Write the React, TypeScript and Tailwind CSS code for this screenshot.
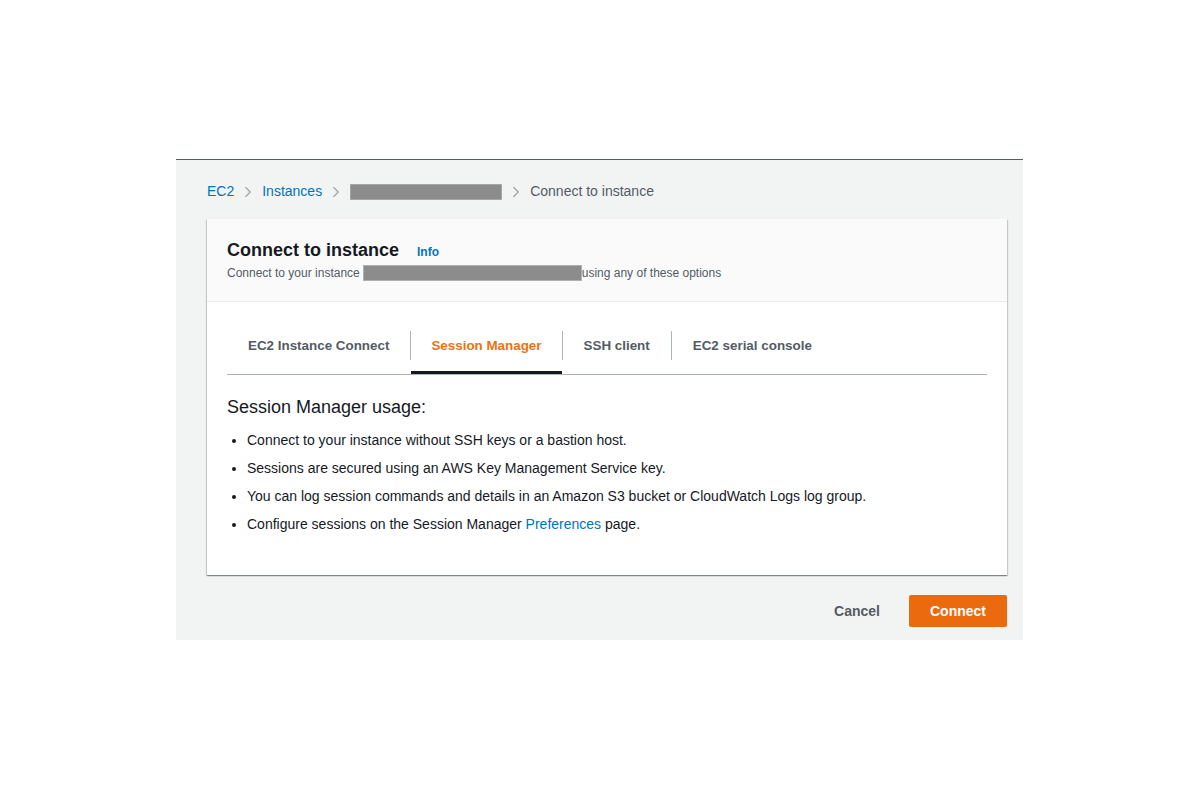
import { ChevronRight } from "lucide-react";

const bullets = [
  "Connect to your instance without SSH keys or a bastion host.",
  "Sessions are secured using an AWS Key Management Service key.",
  "You can log session commands and details in an Amazon S3 bucket or CloudWatch Logs log group.",
];

function Crumb() {
  return <ChevronRight className="mx-[5px] h-[18px] w-[18px] text-[#9aa0a6]" strokeWidth={1.5} />;
}

function Divider() {
  return <div className="mt-[5px] h-[29px] w-px self-start bg-[#aab7b8]" />;
}

export default function App() {
  return (
    <div className="min-h-[800px] w-[1200px] bg-white pt-[159px] pl-[176px] font-['Liberation_Sans',Arial,sans-serif]">
      <div className="h-[481px] w-[847px] border-t border-[#545b64] bg-[#f2f3f3] px-[31px]">
        {/* breadcrumb */}
        <div className="flex h-[59px] items-center pt-[4px] text-[14px]">
          <span className="text-[#0073bb]">EC2</span>
          <Crumb />
          <span className="text-[#0073bb]">Instances</span>
          <Crumb />
          <span className="h-[16px] w-[152px] border border-[#a6a6a6] bg-[#8c8c8c]" />
          <Crumb />
          <span className="text-[#545b64]">Connect to instance</span>
        </div>

        {/* card */}
        <div className="w-[800px] bg-white shadow-[0_1px_1px_0_rgba(0,28,36,0.3),1px_1px_1px_0_rgba(0,28,36,0.15),-1px_1px_1px_0_rgba(0,28,36,0.15)]">
          <div className="border-b border-[#eaeded] bg-[#fafafa] px-[20px] pt-[19px] pb-[20px]">
            <div className="flex items-baseline">
              <h1 className="text-[18px] leading-[24px] font-bold text-[#16191f]">Connect to instance</h1>
              <span className="ml-[18px] text-[12px] font-bold text-[#0073bb]">Info</span>
            </div>
            <div className="mt-[3px] flex h-[16px] items-center text-[12px] leading-[16px] text-[#545b64]">
              <span className="mr-[3px]">Connect to your instance</span>
              <span className="h-[16px] w-[219px] border border-[#b0b0b0] bg-[#8c8c8c]" />
              <span>using any of these options</span>
            </div>
          </div>

          <div className="px-[20px] pt-[24px] pb-[37px]">
            {/* tabs */}
            <div className="flex border-b border-[#aab7b8] text-[13.4px] font-bold text-[#545b64]">
              <div className="flex h-[48px] items-center px-[21px] pb-[8px]">EC2 Instance Connect</div>
              <Divider />
              <div className="flex h-[48px] items-center border-b-[3px] border-[#16191f] px-[20px] pb-[5px] text-[#ec7211]">
                Session Manager
              </div>
              <Divider />
              <div className="flex h-[48px] items-center px-[21px] pb-[8px]">SSH client</div>
              <Divider />
              <div className="flex h-[48px] items-center px-[21px] pb-[8px]">EC2 serial console</div>
            </div>

            <h2 className="mt-[20px] text-[18px] leading-[24px] text-[#16191f]">Session Manager usage:</h2>
            <ul className="mt-[7px] list-disc pl-[20px] text-[14px] text-[#16191f]">
              {bullets.map((b) => (
                <li key={b} className="h-[28px] leading-[28px]">
                  {b}
                </li>
              ))}
              <li className="h-[28px] leading-[28px]">
                Configure sessions on the Session Manager{" "}
                <span className="text-[#0073bb]">Preferences</span> page.
              </li>
            </ul>
          </div>
        </div>

        {/* actions */}
        <div className="mt-[20px] flex w-[800px] items-center justify-end text-[14px] font-bold">
          <span className="mr-[29px] text-[#545b64]">Cancel</span>
          <button className="h-[32px] w-[98px] rounded-[2px] bg-[#ec6a0e] text-white">Connect</button>
        </div>
      </div>
    </div>
  );
}
